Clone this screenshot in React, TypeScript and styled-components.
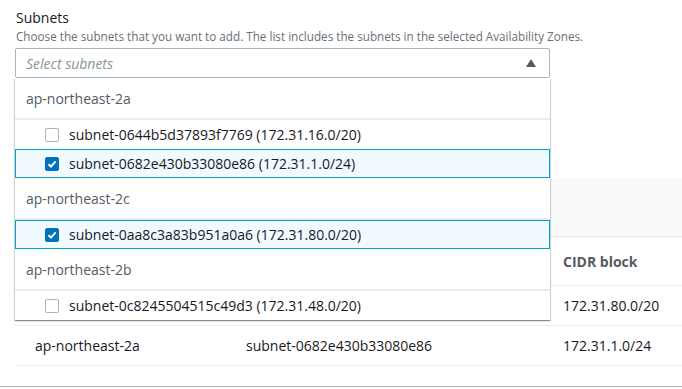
import React from "react";
import styled, { createGlobalStyle } from "styled-components";

const GlobalStyle = createGlobalStyle`
  body {
    margin: 0;
    background: #ffffff;
    font-family: "Open Sans", "Noto Sans", Arial, sans-serif;
    color: #16191f;
  }
`;

const Page = styled.div`
  width: 682px;
  height: 389px;
  overflow: hidden;
  background: #ffffff;
`;

const Field = styled.div`
  padding: 8px 0 0 15px;
`;

const Label = styled.div`
  margin-left: 1px;
  font-size: 14px;
  line-height: 20px;
  color: #16191f;
`;

const Description = styled.div`
  margin-left: 1px;
  font-size: 11.7px;
  line-height: 16px;
  color: #687078;
`;

const SelectWrap = styled.div`
  position: relative;
  margin-top: 4px;
  width: 535px;
  z-index: 10;
`;

const Trigger = styled.div`
  box-sizing: border-box;
  height: 30px;
  border: 1px solid #aab7b8;
  border-radius: 2px;
  display: flex;
  align-items: center;
  justify-content: space-between;
  padding: 0 13px 0 10px;
`;

const Placeholder = styled.span`
  font-size: 14px;
  font-style: italic;
  color: #879596;
`;

const Menu = styled.div`
  position: absolute;
  top: 100%;
  left: 0;
  width: 100%;
  background: #ffffff;
  box-shadow: 0 1px 1px 0 rgba(0, 28, 36, 0.3),
    1px 1px 1px 0 rgba(0, 28, 36, 0.15), -1px 1px 1px 0 rgba(0, 28, 36, 0.15);
`;

const GroupHeader = styled.div`
  box-sizing: border-box;
  height: 42px;
  padding-left: 11px;
  display: flex;
  align-items: center;
  font-size: 14px;
  color: #545b64;
  border-bottom: 2px solid #eaeded;
`;

const Option = styled.div<{ $selected?: boolean }>`
  box-sizing: border-box;
  height: 29px;
  display: flex;
  align-items: center;
  gap: 10px;
  padding-left: 29px;
  font-size: 14px;
  color: #16191f;
  border: 1px solid ${(p) => (p.$selected ? "#00a1c9" : "transparent")};
  background: ${(p) => (p.$selected ? "#f1faff" : "#ffffff")};
`;

const Box = styled.span<{ $checked?: boolean }>`
  box-sizing: border-box;
  width: 14px;
  height: 14px;
  border-radius: 2px;
  border: 1px solid ${(p) => (p.$checked ? "#0073bb" : "#aab7b8")};
  background: ${(p) => (p.$checked ? "#0073bb" : "#ffffff")};
  display: flex;
  align-items: center;
  justify-content: center;
  flex-shrink: 0;
`;

const Section = styled.div`
  margin-top: 100px;
  border-bottom: 1px solid #aab7b8;
  padding-bottom: 20px;
`;

const Table = styled.div`
  margin-left: 15px;
`;

const TableTop = styled.div`
  height: 58px;
  background: #fafafa;
  border-bottom: 1px solid #eaeded;
`;

const Row = styled.div<{ $head?: boolean }>`
  display: grid;
  grid-template-columns: 211px 317px 1fr;
  height: ${(p) => (p.$head ? "48px" : "39px")};
  border-bottom: 1px solid #eaeded;
  align-items: center;
`;

const Cell = styled.div<{ $head?: boolean }>`
  padding-left: 20px;
  font-size: 14px;
  font-weight: ${(p) => (p.$head ? 700 : 400)};
  color: ${(p) => (p.$head ? "#545b64" : "#16191f")};
  white-space: nowrap;
`;

const CheckBox = ({ checked }: { checked?: boolean }) => (
  <Box $checked={checked}>
    {checked && (
      <svg width="10" height="10" viewBox="0 0 10 10">
        <polyline
          points="1.5,5.2 4,7.6 8.6,2.4"
          fill="none"
          stroke="#ffffff"
          strokeWidth="2"
        />
      </svg>
    )}
  </Box>
);

const groups = [
  {
    zone: "ap-northeast-2a",
    items: [
      { label: "subnet-0644b5d37893f7769 (172.31.16.0/20)", checked: false },
      { label: "subnet-0682e430b33080e86 (172.31.1.0/24)", checked: true },
    ],
  },
  {
    zone: "ap-northeast-2c",
    items: [{ label: "subnet-0aa8c3a83b951a0a6 (172.31.80.0/20)", checked: true }],
  },
  {
    zone: "ap-northeast-2b",
    items: [{ label: "subnet-0c8245504515c49d3 (172.31.48.0/20)", checked: false }],
  },
];

const rows = [
  ["ap-northeast-2c", "subnet-0aa8c3a83b951a0a6", "172.31.80.0/20"],
  ["ap-northeast-2a", "subnet-0682e430b33080e86", "172.31.1.0/24"],
];

export default function App() {
  return (
    <Page>
      <GlobalStyle />
      <Field>
        <Label>Subnets</Label>
        <Description>
          Choose the subnets that you want to add. The list includes the subnets in the
          selected Availability Zones.
        </Description>
        <SelectWrap>
          <Trigger>
            <Placeholder>Select subnets</Placeholder>
            <svg width="10" height="8" viewBox="0 0 10 8">
              <polygon points="5,0 10,8 0,8" fill="#545b64" />
            </svg>
          </Trigger>
          <Menu>
            {groups.map((g) => (
              <div key={g.zone}>
                <GroupHeader>{g.zone}</GroupHeader>
                {g.items.map((it) => (
                  <Option key={it.label} $selected={it.checked}>
                    <CheckBox checked={it.checked} />
                    {it.label}
                  </Option>
                ))}
              </div>
            ))}
          </Menu>
        </SelectWrap>
      </Field>
      <Section>
        <Table>
          <TableTop />
          <Row $head>
            <Cell $head>Availability Zone</Cell>
            <Cell $head>Subnet ID</Cell>
            <Cell $head>CIDR block</Cell>
          </Row>
          {rows.map((r) => (
            <Row key={r[1]}>
              {r.map((c) => (
                <Cell key={c}>{c}</Cell>
              ))}
            </Row>
          ))}
        </Table>
      </Section>
    </Page>
  );
}
